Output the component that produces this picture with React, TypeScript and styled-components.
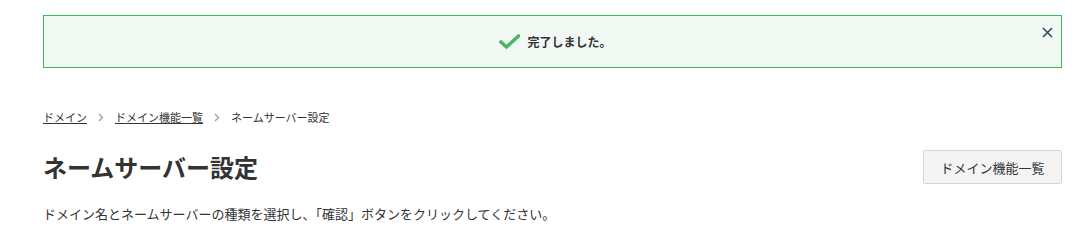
import React from 'react';
import styled, { createGlobalStyle } from 'styled-components';

const GlobalStyle = createGlobalStyle`
  html, body {
    margin: 0;
    padding: 0;
    background: #fff;
  }
  body {
    font-family: "Noto Sans CJK JP", "Noto Sans", sans-serif;
    color: #333;
  }
`;

const Page = styled.div`
  padding: 15px 17px 0 43px;
`;

const Alert = styled.div`
  position: relative;
  height: 53px;
  box-sizing: border-box;
  border: 1px solid #3cb853;
  background: #f2f9f4;
  display: flex;
  align-items: center;
  justify-content: center;
  gap: 7px;
  padding-left: 6px;
`;

const AlertText = styled.span`
  font-size: 12px;
  font-weight: bold;
  color: #333;
  line-height: 1;
`;

const CloseButton = styled.button`
  position: absolute;
  top: 8px;
  right: 6px;
  width: 16px;
  height: 16px;
  padding: 0;
  border: none;
  background: transparent;
  display: flex;
  align-items: center;
  justify-content: center;
  cursor: pointer;
`;

const Breadcrumb = styled.nav`
  margin-top: 42px;
  display: flex;
  align-items: center;
  gap: 11px;
  font-size: 11px;
  line-height: 14px;
`;

const CrumbLink = styled.a`
  color: #333;
  text-decoration: underline;
  cursor: pointer;
`;

const CrumbCurrent = styled.span`
  color: #333;
`;

const HeaderRow = styled.div`
  margin-top: 26px;
  display: flex;
  align-items: center;
  justify-content: space-between;
`;

const Title = styled.h1`
  margin: 0;
  font-size: 24px;
  font-weight: bold;
  line-height: 34px;
  color: #333;
`;

const SubButton = styled.button`
  height: 34px;
  width: 139px;
  box-sizing: border-box;
  border: 1px solid #d6d6d6;
  border-radius: 2px;
  background: #f4f4f4;
  font-family: inherit;
  font-size: 13px;
  color: #333;
  cursor: pointer;
`;

const Description = styled.p`
  margin: 21px 0 0;
  font-size: 13px;
  line-height: 18px;
  color: #333;
`;

const Check = () => (
  <svg width="21" height="15" viewBox="0 0 21 15">
    <path d="M2 8 L7.5 13 L19.5 2" fill="none" stroke="#47b75c" strokeWidth="3.4" strokeLinecap="square" />
  </svg>
);

const Chevron = () => (
  <svg width="6" height="9" viewBox="0 0 6 9">
    <path d="M1 1 L4.5 4.5 L1 8" fill="none" stroke="#999" strokeWidth="1.2" />
  </svg>
);

const Cross = () => (
  <svg width="11" height="11" viewBox="0 0 11 11">
    <path d="M1 1 L10 10 M10 1 L1 10" stroke="#2f4a5a" strokeWidth="1.6" />
  </svg>
);

export default function App() {
  return (
    <Page>
      <GlobalStyle />
      <Alert>
        <Check />
        <AlertText>完了しました。</AlertText>
        <CloseButton aria-label="close">
          <Cross />
        </CloseButton>
      </Alert>
      <Breadcrumb>
        <CrumbLink>ドメイン</CrumbLink>
        <Chevron />
        <CrumbLink>ドメイン機能一覧</CrumbLink>
        <Chevron />
        <CrumbCurrent>ネームサーバー設定</CrumbCurrent>
      </Breadcrumb>
      <HeaderRow>
        <Title>ネームサーバー設定</Title>
        <SubButton>ドメイン機能一覧</SubButton>
      </HeaderRow>
      <Description>
        ドメイン名とネームサーバーの種類を選択し、「確認」ボタンをクリックしてください。
      </Description>
    </Page>
  );
}
